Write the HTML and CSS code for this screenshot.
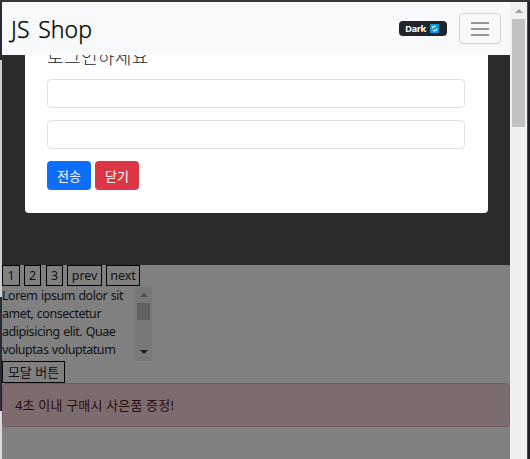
FILE: index.html
```html
<!DOCTYPE html>
<html lang="ko">
<head>
<meta charset="utf-8">
<title>JS Shop</title>
<link rel="stylesheet" href="styles.css">
</head>
<body>
<div class="window">
  <div class="edge-left"><i class="dark-a"></i><i class="light-a"></i><i class="dark-b"></i><i class="light-b"></i></div>
  <div class="page">
    <nav class="navbar">
      <span class="brand">JS Shop</span>
      <span class="badge"><span>Dark</span>
        <svg width="9" height="9" viewBox="0 0 9 9"><rect width="9" height="9" rx=".6" fill="#0899e5"/><path d="M2.4 5V2.5H5.5M4.6 1.5l1.2 1-1.2 1M6.6 4v2.5H3.5M4.4 5.5l-1.2 1 1.2 1" fill="none" stroke="#e7f7ff" stroke-width=".9"/></svg>
      </span>
      <button class="toggler" aria-label="menu"><svg width="18" height="14" viewBox="0 0 18 14"><path d="M0 1h18M0 7h18M0 13h18" stroke="#747576" stroke-width="1.7"/></svg></button>
    </nav>
    <section class="backdrop">
      <form class="dialog">
        <h4>로그인하세요</h4>
        <input type="text" aria-label="id">
        <input type="password" aria-label="password">
        <div class="actions"><button type="button" class="btn send">전송</button><button type="button" class="btn close">닫기</button></div>
      </form>
    </section>
    <div class="pager"><button class="n1">1</button><button class="n2">2</button><button class="n3">3</button><button class="prev">prev</button><button class="next">next</button></div>
    <div class="lorem">
      <div class="lines"><p class="l1">Lorem ipsum dolor sit</p><p class="l2">amet, consectetur</p><p class="l3">adipisicing elit. Quae</p><p class="l4">voluptas voluptatum</p></div>
      <div class="bar"><i class="up"></i><i class="thumb"></i><i class="down"></i></div>
    </div>
    <button class="modal-btn">모달 버튼</button>
    <div class="alert"><span>4초 이내 구매시 사은품 증정!</span></div>
  </div>
  <div class="scroll"><i class="up"></i><i class="thumb"></i></div>
  <div class="edge-right"></div>
</div>
</body>
</html>
```
FILE: styles.css
```css
* { box-sizing: border-box; margin: 0; }
body { width: 530px; height: 459px; overflow: hidden; background: #35353a; font-family: "Noto Sans", "Noto Sans CJK KR", sans-serif; font-size: 13px; }
i { display: block; }
button { font: inherit; padding: 0; white-space: nowrap; }
.window { display: flex; height: 459px; padding-top: 2px; }
.edge-left { width: 2px; }
.dark-a { height: 58px; background: #2b2b33; }
.light-a { height: 237px; background: #cdcdcd; }
.dark-b { height: 114px; background: #292c34; }
.light-b { height: 48px; background: #dadada; }
.page { width: 508px; height: 457px; background: #808080; overflow: hidden; }
.navbar { display: flex; align-items: center; height: 53px; padding: 0 9px; background: #f8f9fa; }
.brand { flex: 1; font-size: 23px; font-weight: 300; color: #000; line-height: 30px; letter-spacing: .1px; word-spacing: 2.5px; -webkit-text-stroke: .25px #000; }
.badge { display: flex; align-items: center; justify-content: space-between; width: 48px; height: 15px; padding: 0 8px 0 6px; border-radius: 4px; background: #212529; color: #fff; font: bold 9.5px/14px "Open Sans", sans-serif; letter-spacing: -.55px; margin-right: 12px; }
.toggler { width: 42px; height: 31px; border: 1px solid #d2d4d6; border-radius: 4px; background: none; display: flex; align-items: center; justify-content: center; }
.backdrop { height: 210px; background: #2c2c2c; padding: 0 22px 0 23px; overflow: hidden; }
.dialog { display: flow-root; height: 158px; background: #fff; border-radius: 0 0 4px 4px; padding: 0 23px 0 22px; }
h4 { height: 32px; margin-top: -8px; font-size: 18px; line-height: 20px; font-weight: 300; letter-spacing: .4px; color: #212529; }
.dialog input { display: block; width: 418px; height: 29px; margin-bottom: 12px; border: 1px solid #dee2e6; border-radius: 4px; background: #fff; }
.actions { display: flex; gap: 4px; }
.btn { width: 44px; height: 29px; border: 0; border-radius: 4px; color: #fff; }
.send { background: #0d6efd; }
.close { background: #dc3545; }
.pager { display: flex; height: 21px; }
.pager button, .modal-btn { display: block; height: 21px; border: 1px solid #000; background: #808080; color: #111; line-height: 18px; }
.pager button { font-size: 12.5px; letter-spacing: -.1px; }
.n1 { width: 18px; margin-right: 4px; }
.n2 { width: 17px; margin-right: 5px; }
.n3 { width: 17px; margin-right: 4px; }
.prev { width: 35px; margin-right: 4px; }
.next { width: 34px; }
.lorem { display: flex; width: 150px; height: 75px; overflow: hidden; color: #111315; }
.lines { width: 133px; padding-top: 1px; white-space: nowrap; font-size: 12.5px; line-height: 18px; letter-spacing: -.45px; word-spacing: .6px; }
.bar { width: 17px; background: #787878; display: flex; flex-direction: column; align-items: center; }
.up { border: 4px solid transparent; border-top: 0; border-bottom: 4px solid #505050; margin: 7px 0 6px; }
.bar .thumb { width: 13px; height: 17px; background: #606060; }
.down { border: 4px solid transparent; border-bottom: 0; border-top: 4px solid #222; margin-top: 30px; }
.modal-btn { width: 63px; height: 22px; }
.alert { height: 44px; border: 1px solid #7b5a5e; border-radius: 4px; background: #7c6c6d; color: #2c0b0e; padding: 0 12px; line-height: 43px; letter-spacing: .18px; }
.scroll { width: 17px; background: #f0f0f0; display: flex; flex-direction: column; align-items: center; }
.scroll .up { border-bottom-color: #a3a3a3; }
.scroll .thumb { width: 13px; height: 108px; background: #c1c1c1; }
.edge-right { width: 3px; background: #202124; border-left: 1px solid #4a4a4d; }
```
